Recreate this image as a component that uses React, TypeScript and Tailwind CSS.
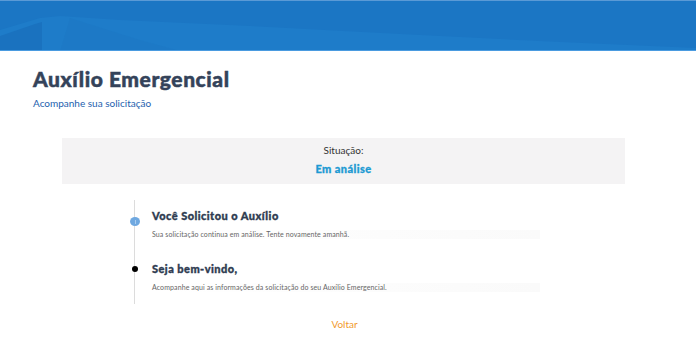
import React from "react";

export default function App() {
  return (
    <div className="w-[696px] h-[348px] bg-white overflow-hidden" style={{ fontFamily: "Lato, 'Open Sans', sans-serif" }}>
      <div className="relative h-[51px] bg-[#1b76c4] overflow-hidden">
        <svg className="absolute inset-0" width="696" height="51" viewBox="0 0 696 51" preserveAspectRatio="none">
          <path d="M0 30 L40 18 L60 16 L120 20 L250 26 L400 34 L560 42 L696 48 L696 51 L0 51 Z" fill="#1e7cc9" />
          <path d="M0 36 L35 24 L42 22 L42 51 L0 51 Z" fill="#1a72bf" />
          <path d="M70 18 L140 40 L180 51 L60 51 Z" fill="#1c78c5" opacity="0.6" />
          <rect x="0" y="0" width="696" height="1" fill="#5a9ad6" />
          <rect x="0" y="50" width="696" height="1" fill="#4a9be0" />
        </svg>
      </div>
      <div className="pl-[33px] pt-[15px]">
        <h1 className="text-[21px] leading-[26px] font-black text-[#34435a] tracking-[0.55px] [-webkit-text-stroke:0.5px_#34435a]">Auxílio Emergencial</h1>
        <p className="mt-[5px] text-[10px] leading-[12px] text-[#1d5fae]">Acompanhe sua solicitação</p>
      </div>
      <div className="ml-[62px] w-[563px] mt-[29px] h-[46px] bg-[#f4f3f4] flex flex-col items-center pt-[6px]">
        <div className="text-[10px] leading-[12px] text-[#333]">Situação:</div>
        <div className="mt-[6px] text-[11px] leading-[13px] font-black text-[#1d9ad3] tracking-[0.4px] [-webkit-text-stroke:0.3px_#1d9ad3]">Em análise</div>
      </div>
      <div className="relative ml-[134px] mt-[16px] w-[406px] border-l border-[#dcdcdc] pb-[4px]">
        <div className="relative pl-[17px] pt-[9px] pb-[12px]">
          <span className="absolute left-[-5px] top-[17px] w-[10px] h-[9px] rounded-[50%] bg-[#6fa8e0] flex items-center justify-center">
            <span className="w-[1px] h-[4px] bg-[#a9cdf0]" />
          </span>
          <div className="text-[11px] leading-[14px] font-black text-[#2f3c51] tracking-[0.45px] [-webkit-text-stroke:0.35px_#2f3c51]">Você Solicitou o Auxílio</div>
          <div className="mt-[7px] text-[7px] leading-[9px] text-[#666] tracking-[0.1px] bg-gradient-to-r from-white to-[#fafafa]">Sua solicitação continua em análise. Tente novamente amanhã.</div>
        </div>
        <div className="relative pl-[17px] pt-[11px] pb-[8px]">
          <span className="absolute left-[-3.5px] top-[15px] w-[6px] h-[6px] rounded-full bg-black" />
          <div className="text-[11px] leading-[14px] font-black text-[#2f3c51] tracking-[0.45px] [-webkit-text-stroke:0.35px_#2f3c51]">Seja bem-vindo,</div>
          <div className="mt-[7px] text-[7px] leading-[9px] text-[#666] tracking-[0.1px] bg-gradient-to-r from-white to-[#fafafa]">Acompanhe aqui as informações da solicitação do seu Auxílio Emergencial.</div>
        </div>
      </div>
      <div className="mt-[14px] flex justify-center pr-[7px]">
        <span className="text-[10px] leading-[12px] text-[#f19a2c]">Voltar</span>
      </div>
    </div>
  );
}
